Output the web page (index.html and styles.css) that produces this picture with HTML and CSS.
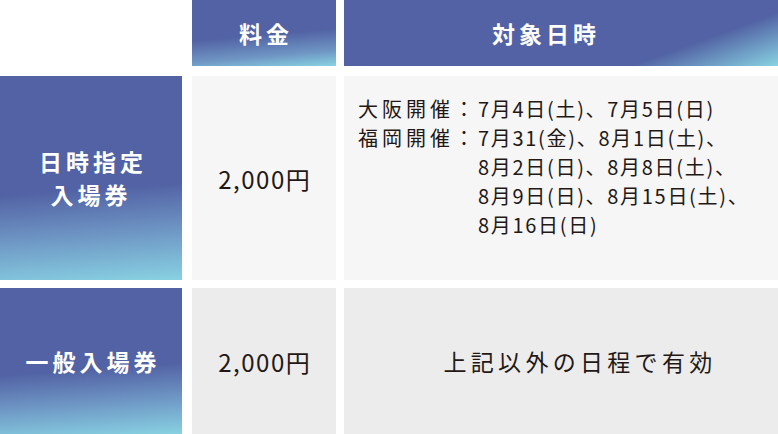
FILE: index.html
```html
<!DOCTYPE html>
<html lang="ja">
<head>
<meta charset="utf-8">
<link rel="stylesheet" href="styles.css">
</head>
<body>
<div class="table">
  <div class="row head">
    <div class="c1 blank"></div>
    <div class="c2 th th-narrow">料金</div>
    <div class="c3 th th-wide">対象日時</div>
  </div>
  <div class="row r1">
    <div class="c1 label">日時指定<br>入場券</div>
    <div class="c2 price">2,000円</div>
    <div class="c3 dates">
      <div class="dl">
        <span class="place">大阪開催：</span>
        <span class="days">7月4日(土)、7月5日(日)</span>
        <span class="place">福岡開催：</span>
        <span class="days">7月31(金)、8月1日(土)、<br>8月2日(日)、8月8日(土)、<br>8月9日(日)、8月15日(土)、<br>8月16日(日)</span>
      </div>
    </div>
  </div>
  <div class="row r2">
    <div class="c1 label">一般入場券</div>
    <div class="c2 price">2,000円</div>
    <div class="c3 note">上記以外の日程で有効</div>
  </div>
</div>
</body>
</html>
```

FILE: styles.css
```css
html, body {
  margin: 0;
  padding: 0;
  background: #ffffff;
}
body {
  width: 778px;
  height: 434px;
  overflow: hidden;
  font-family: "Noto Sans CJK JP", "Noto Sans", sans-serif;
  color: #231815;
}
.table {
  display: flex;
  flex-direction: column;
}
.row {
  display: flex;
}
.head { height: 66px; margin-bottom: 10px; }
.r1 { height: 204px; margin-bottom: 8px; }
.r2 { height: 146px; }
.c1 { width: 182px; margin-right: 10px; flex: none; }
.c2 { width: 144px; margin-right: 8px; flex: none; }
.c3 { flex: 1; }

.th {
  display: flex;
  align-items: center;
  justify-content: center;
  box-sizing: border-box;
  color: #ffffff;
  font-weight: 700;
  font-size: 23px;
  letter-spacing: 4px;
  text-indent: 4px;
}
.th-narrow {
  background: linear-gradient(175deg, #5262a4 52%, #6f96c4 80%, #88d3e2 100%);
}
.th-wide {
  padding-right: 34px;
  background: linear-gradient(160deg, #5262a4 76%, #88d3e2 100%);
}
.label {
  display: flex;
  align-items: center;
  justify-content: center;
  text-align: center;
  color: #ffffff;
  font-weight: 700;
  font-size: 23px;
  line-height: 33px;
  letter-spacing: 4px;
  text-indent: 4px;
  background: linear-gradient(176deg, #5262a4 55%, #6c92c2 75%, #88d2e2 100%);
}
.price {
  display: flex;
  align-items: center;
  justify-content: center;
  font-size: 24px;
  letter-spacing: 1.5px;
  text-indent: 1.5px;
}
.r1 .c2, .r1 .c3 { background: #f6f6f6; }
.r2 .c2, .r2 .c3 { background: #ececec; }

.dates {
  display: flex;
  align-items: center;
  padding-left: 14px;
  padding-bottom: 24px;
  box-sizing: border-box;
}
.dl {
  display: grid;
  grid-template-columns: auto auto;
  font-size: 20px;
  line-height: 29px;
  letter-spacing: 1.7px;
}
.place {
  letter-spacing: 4px;
}
.note {
  display: flex;
  align-items: center;
  justify-content: center;
  box-sizing: border-box;
  padding-left: 34px;
  font-size: 23px;
  letter-spacing: 4.3px;
  text-indent: 4px;
}
```
